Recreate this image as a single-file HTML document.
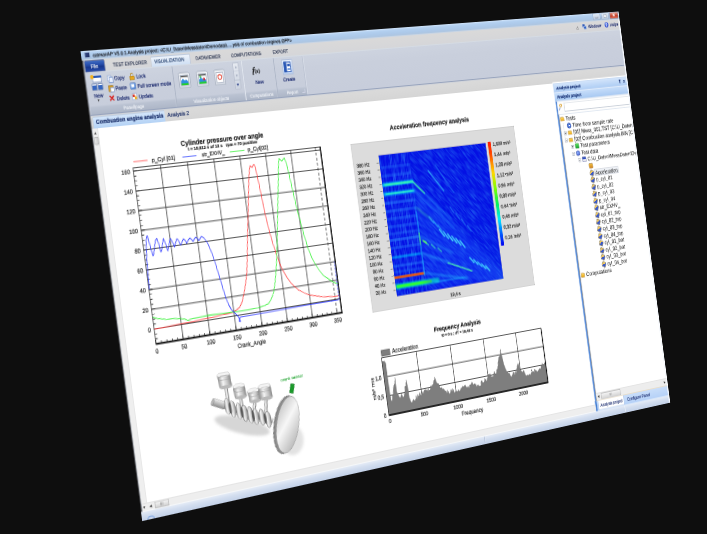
<!DOCTYPE html><html><head><meta charset="utf-8"><title>catmanAP</title>
<style>
html,body{margin:0;padding:0;background:#0e0e0e;}
body{width:707px;height:534px;overflow:hidden;position:relative;font-family:"Liberation Sans", sans-serif;}
#persp{position:absolute;left:0;top:0;width:705.60px;height:441.00px;transform-origin:0 0;transform:matrix3d(0.9380493,-0.052990099,0,0.00028470207,0.13960024,1.0644003,0,-2.1734136e-06,0,0,1,0,80.5,51.2,0,1) translate(-3px,-3px);border:3px solid transparent;background:#fff;background-clip:padding-box;box-sizing:content-box}
#win{position:absolute;left:0;top:0;width:1680px;height:1050px;transform-origin:0 0;transform:scale(0.42);background:#fff;overflow:hidden;font-size:12px;color:#1a2a50;-webkit-text-stroke:0.35px;}
#win div,#win span,#win svg{position:absolute;box-sizing:border-box;white-space:nowrap;}
.t{line-height:14px;height:14px;}
.tab{top:29px;font-size:11px;color:#2b3550;letter-spacing:0px}
.sb{font-size:12px;color:#16256b;}
.gl{top:126px;height:17px;line-height:17px;font-size:11px;color:#f4f6fa;text-align:center;}
.sep{top:50px;width:2px;height:93px;background:linear-gradient(90deg,#aab3c4 0 1px,#e4e9f1 1px 2px);}
.tr{font-size:15px;color:#111;height:18px;line-height:18px;-webkit-text-stroke:0.05px;}
.ic{width:14px;height:14px;border-radius:3px;}
#win svg text{stroke:#222;stroke-width:0.35px;}
</style></head><body>
<div id="persp"><div id="win">
<div style="left:0;top:0;width:1680px;height:21px;background:linear-gradient(180deg,#d2e5fa 0%,#b3d0f0 22%,#acc8e8 65%,#b0c5dd 100%);"></div>
<div style="left:9px;top:3px;width:14px;height:13px;background:linear-gradient(135deg,#3a4f8a,#1b2a5c);border-radius:2px;border:1px solid #8fa3c8"></div>
<div class="t" style="left:30px;top:4px;font-size:11.6px;color:#15171c;">catmanAP V5.0.1 Analysis project: &lt;C:\U_Daten\Messdaten\Demodata\.....ysis of combustion engines.OFP&gt;</div>
<div style="left:1584px;top:1px;width:27px;height:17px;border:1px solid #7f93b3;border-radius:0 0 0 4px;background:linear-gradient(180deg,#e3ecf7,#b9c9df);"></div>
<div style="left:1592px;top:10px;width:11px;height:3px;background:#fff;border:1px solid #55607a"></div>
<div style="left:1615px;top:1px;width:28px;height:17px;border:1px solid #7f93b3;background:linear-gradient(180deg,#e3ecf7,#b9c9df);"></div>
<div style="left:1624px;top:5px;width:10px;height:9px;border:1.5px solid #7d879c;background:#f4f6fa"></div>
<div style="left:1647px;top:1px;width:30px;height:17px;border:1px solid #7a2a22;border-radius:0 0 4px 0;background:linear-gradient(180deg,#e8a090 0%,#d2553f 45%,#c03a25 55%,#d9705a 100%);"></div>
<div class="t" style="left:1656px;top:2px;font-size:13px;font-weight:bold;color:#fff;">&#10005;</div>
<div style="left:0;top:21px;width:1680px;height:27px;background:linear-gradient(180deg,#dad9d9,#d5d6d9);"></div>
<div style="left:0;top:21px;width:5px;height:1029px;background:linear-gradient(90deg,#2a2a2c 0,#6a6c72 3px,#cfdcee 5px);"></div>
<div style="left:6px;top:22px;width:52px;height:26px;border-radius:3px 3px 0 0;background:linear-gradient(180deg,#3f6cc4 0%,#2248a6 45%,#17368c 55%,#2349aa 100%);border:1px solid #132a70;"></div>
<div class="t" style="left:21px;top:29px;font-size:12px;color:#fff;">File</div>
<div class="t tab" style="left:80px;">TEST EXPLORER</div>
<div style="left:182px;top:24px;width:108px;height:24px;border:1px solid #9db4d6;border-bottom:none;border-radius:3px 3px 0 0;background:linear-gradient(180deg,#eef4fc,#cfdff3);"></div>
<div class="t tab" style="left:191px;color:#24406e">VISUALIZATION</div>
<div class="t tab" style="left:305px;">DATAVIEWER</div>
<div class="t tab" style="left:405px;">COMPUTATIONS</div>
<div class="t tab" style="left:526px;">EXPORT</div>
<div class="t" style="left:1519px;top:27px;font-size:11px;color:#666;">&#9651;</div>
<div style="left:1541px;top:26px;width:10px;height:9px;background:#2a54b0;border:1px solid #fff"></div>
<div style="left:1546px;top:31px;width:10px;height:9px;background:#3565c4;border:1px solid #fff"></div>
<div class="t" style="left:1562px;top:27px;color:#1d2c6e;">Window&#x25BE;</div>
<div style="left:1623px;top:26px;width:14px;height:14px;border-radius:7px;background:radial-gradient(circle at 40% 35%,#6a8cf0,#1028b8);"></div>
<div class="t" style="left:1627px;top:26px;color:#fff;font-weight:bold;font-size:11px">?</div>
<div class="t" style="left:1643px;top:27px;color:#1d2c6e;">Help&#x25BE;</div>
<div style="left:4px;top:48px;width:1676px;height:96px;background:linear-gradient(180deg,#cdd3df 0%,#c9cfdc 30%,#c7cddb 100%);border-top:1px solid #b5bfd0;"></div>
<div style="left:6px;top:125px;width:229px;height:18px;background:linear-gradient(180deg,#bcc4d3,#adb6c7);"></div>
<div class="gl" style="left:6px;width:229px;">Panel/page</div>
<div style="left:238px;top:125px;width:192px;height:18px;background:linear-gradient(180deg,#bcc4d3,#adb6c7);"></div>
<div class="gl" style="left:238px;width:192px;">Visualization objects</div>
<div style="left:433px;top:125px;width:90px;height:18px;background:linear-gradient(180deg,#bcc4d3,#adb6c7);"></div>
<div class="gl" style="left:433px;width:90px;">Computations</div>
<div style="left:526px;top:125px;width:85px;height:18px;background:linear-gradient(180deg,#bcc4d3,#adb6c7);"></div>
<div class="gl" style="left:526px;width:85px;">Report</div>
<div class="sep" style="left:236px;"></div>
<div class="sep" style="left:431px;"></div>
<div class="sep" style="left:524px;"></div>
<div class="sep" style="left:611px;"></div>
<div style="left:16px;top:55px;width:32px;height:36px;"><div style="left:5px;top:2px;width:24px;height:15px;background:#fff;border:1px solid #3a5a9c;"></div><div style="left:5px;top:2px;width:24px;height:5px;background:#2a57b5;"></div><div style="left:0px;top:0px;width:9px;height:9px;border-radius:5px;background:#f4b21c;"></div><div style="left:2px;top:20px;width:13px;height:14px;background:linear-gradient(180deg,#fff 30%,#3565c0 30%);border:1px solid #3a5a9c;"></div><div style="left:17px;top:20px;width:13px;height:14px;background:linear-gradient(180deg,#fff 30%,#3565c0 30%);border:1px solid #3a5a9c;"></div></div>
<div class="t sb" style="left:20px;top:95px;">New</div>
<div class="t" style="left:28px;top:106px;font-size:8px;color:#333">&#x25BE;</div>
<div style="left:60px;top:59px;width:11px;height:13px;background:#fff;border:1px solid #5b7fc0;"></div><div style="left:64px;top:63px;width:11px;height:13px;background:#e8f0ff;border:1px solid #3a62b0;"></div>
<div class="t sb" style="left:78px;top:59px;">Copy</div>
<div style="left:60px;top:81px;width:13px;height:15px;background:#d9a028;border:1px solid #8a6412;border-radius:2px"></div><div style="left:65px;top:86px;width:10px;height:11px;background:#fff;border:1px solid #4a6cb0;"></div>
<div class="t sb" style="left:78px;top:82px;">Paste</div>
<div class="t" style="left:58px;top:103px;font-size:19px;line-height:16px;font-weight:bold;color:#d8201c;">&#10005;</div>
<div class="t sb" style="left:78px;top:105px;">Delete</div>
<div style="left:119px;top:64px;width:13px;height:10px;background:#e6a81e;border:1px solid #8f6510;border-radius:2px"></div><div style="left:121px;top:57px;width:9px;height:10px;border:2px solid #b98a20;border-bottom:none;border-radius:5px 5px 0 0"></div>
<div class="t sb" style="left:137px;top:59px;">Lock</div>
<div style="left:118px;top:80px;width:15px;height:14px;background:linear-gradient(135deg,#9cc3f5,#2f6fd0);border:1px solid #2a5cb0;border-radius:2px"></div><div style="left:121px;top:83px;width:8px;height:7px;background:#fff;"></div>
<div class="t sb" style="left:137px;top:81px;">Full screen mode</div>
<div style="left:119px;top:104px;width:14px;height:14px;background:#fff;border:1px solid #4a6cb0;"></div><div style="left:121px;top:106px;width:6px;height:6px;background:#d83a2a;"></div><div style="left:126px;top:111px;width:6px;height:6px;background:#f0b020;"></div>
<div class="t sb" style="left:137px;top:105px;">Update</div>
<div style="left:251px;top:66px;width:31px;height:36px;border:1px solid #8d97a8;border-radius:4px;background:linear-gradient(180deg,#f3f5f8,#d5dae3);"><div style="left:3px;top:5px;width:23px;height:24px;background:#fff;border:1px solid #6a7a94;"></div><svg style="left:4px;top:6px" width="21" height="22" viewBox="0 0 21 22"><rect width="21" height="4" fill="#5a5a5a"/><path d="M0 22 L0 14 L6 7 L11 12 L15 9 L21 15 L21 22Z" fill="#2f8fe0"/><path d="M0 22 L0 18 L21 18 L21 22Z" fill="#26d026"/></svg></div>
<div style="left:301px;top:66px;width:31px;height:36px;border:1px solid #8d97a8;border-radius:4px;background:linear-gradient(180deg,#f3f5f8,#d5dae3);"><div style="left:3px;top:5px;width:23px;height:24px;background:#fff;border:1px solid #6a7a94;"></div><svg style="left:4px;top:6px" width="21" height="22" viewBox="0 0 21 22"><rect width="21" height="4" fill="#5a5a5a"/><path d="M0 22 L0 14 L6 7 L11 12 L15 9 L21 15 L21 22Z" fill="#2f8fe0"/><path d="M0 22 L0 18 L21 18 L21 22Z" fill="#26d026"/><circle cx="15" cy="12" r="3" fill="#e02020"/><circle cx="5" cy="6" r="2.5" fill="#20c020"/></svg></div>
<div style="left:350px;top:66px;width:31px;height:36px;border:1px solid #8d97a8;border-radius:4px;background:linear-gradient(180deg,#f3f5f8,#d5dae3);"><div style="left:4px;top:5px;width:21px;height:24px;background:#fff;border:1px solid #6a7a94;border-radius:2px"></div><div style="left:8px;top:10px;width:13px;height:13px;border:2.5px solid #e03a2a;border-radius:7px;"></div></div>
<div style="left:406px;top:53px;width:16px;height:62px;border:1px solid #aab3c4;background:linear-gradient(180deg,#e6eaf1,#cdd4e0);"></div>
<div style="left:406px;top:73px;width:16px;height:1px;background:#aab3c4;"></div><div style="left:406px;top:94px;width:16px;height:1px;background:#aab3c4;"></div>
<div class="t" style="left:410px;top:57px;font-size:8px;color:#9aa4b8">&#x25B2;</div><div class="t" style="left:410px;top:77px;font-size:8px;color:#9aa4b8">&#x25BC;</div><div class="t" style="left:409px;top:98px;font-size:10px;color:#2a3f88">&#x25BC;</div>
<div class="t" style="left:460px;top:63px;font-family:'Liberation Serif',serif;font-size:20px;line-height:22px;height:22px;font-style:italic;font-weight:bold;color:#111;">f<span style="position:static;font-size:13px;font-style:normal">(x)</span></div>
<div class="t sb" style="left:465px;top:96px;">New</div>
<div style="left:548px;top:56px;width:31px;height:35px;background:linear-gradient(180deg,#e9f1fc,#b9cff0);border:1px solid #9ab0d8"></div>
<div style="left:553px;top:61px;width:21px;height:25px;background:#fff;border:2px solid #2a58b5;"></div><div style="left:553px;top:61px;width:8px;height:25px;background:#2a58b5;"></div><div style="left:563px;top:66px;width:8px;height:6px;background:#2a58b5;"></div><div style="left:563px;top:76px;width:8px;height:5px;background:#7fa3e0;"></div>
<div class="t sb" style="left:546px;top:96px;">Create</div>
<div style="left:598px;top:129px;width:8px;height:8px;border:1px solid #eef;border-top:none;border-left:none"></div>
<div style="left:4px;top:143px;width:1676px;height:31px;background:linear-gradient(180deg,#dadada,#d5d5d5);border-top:3px solid #98a4bd"></div>
<div style="left:8px;top:148px;width:193px;height:26px;background:linear-gradient(180deg,#d4e6fb,#b4d2f5);border:1px solid #8fb2e0;border-bottom:none;border-radius:2px 2px 0 0"></div>
<div class="t" style="left:16px;top:153px;font-size:13.3px;font-weight:bold;color:#152a66;">Combustion engine analysis</div>
<div class="t" style="left:207px;top:153px;font-size:13.2px;color:#1c2e66;">Analysis 2</div>
<div style="left:4px;top:174px;width:1404px;height:838px;background:#fff;"></div>
<div style="left:4px;top:174px;width:15px;height:838px;background:#efefef;border-right:1px solid #dcdcdc"></div>
<div class="t" style="left:6px;top:177px;font-size:9px;color:#444">&#x25B2;</div>
<div style="left:6px;top:193px;width:11px;height:17px;background:linear-gradient(90deg,#e8e8e8,#c9c9c9);border:1px solid #999;border-radius:2px"></div>
<svg style="left:0;top:0" width="1680" height="1050" viewBox="0 0 1680 1050" font-family='"Liberation Sans", sans-serif'><defs><linearGradient id="cbar" x1="0" y1="0" x2="0" y2="1"><stop offset="0" stop-color="#ff1a00"/><stop offset="0.12" stop-color="#ff4a00"/><stop offset="0.3" stop-color="#ffd800"/><stop offset="0.45" stop-color="#7dff00"/><stop offset="0.6" stop-color="#00f060"/><stop offset="0.75" stop-color="#00e8ff"/><stop offset="0.88" stop-color="#0060ff"/><stop offset="1" stop-color="#0000f0"/></linearGradient><filter id="noise" x="0" y="0" width="100%" height="100%"><feTurbulence type="fractalNoise" baseFrequency="0.3 0.035" numOctaves="2" seed="3"/><feColorMatrix type="matrix" values="0 0 0 0 0.05  0 0 0 0 0.45  0 0 0 0 1  1.6 0 0 0 -0.62"/></filter><filter id="noise2" x="0" y="0" width="100%" height="100%"><feTurbulence type="fractalNoise" baseFrequency="0.5 0.03" numOctaves="2" seed="8"/><feColorMatrix type="matrix" values="0 0 0 0 0.05  0 0 0 0 0.35  0 0 0 0 1  1.5 0 0 0 -0.6"/></filter><filter id="b1"><feGaussianBlur stdDeviation="1.2"/></filter><filter id="b2"><feGaussianBlur stdDeviation="2.5"/></filter><filter id="b6"><feGaussianBlur stdDeviation="7"/></filter><clipPath id="spclip"><rect x="0" y="0" width="350" height="346"/></clipPath><clipPath id="spclipR"><rect x="97" y="0" width="253" height="346"/></clipPath><linearGradient id="metal" x1="0" y1="0" x2="1" y2="0"><stop offset="0" stop-color="#9a9a9a"/><stop offset="0.35" stop-color="#f4f4f4"/><stop offset="0.7" stop-color="#c4c4c4"/><stop offset="1" stop-color="#8c8c8c"/></linearGradient><linearGradient id="metalv" x1="0" y1="0" x2="0" y2="1"><stop offset="0" stop-color="#f2f2f2"/><stop offset="0.5" stop-color="#bdbdbd"/><stop offset="1" stop-color="#8a8a8a"/></linearGradient><linearGradient id="disc" x1="0" y1="0" x2="1" y2="1"><stop offset="0" stop-color="#b8b8b8"/><stop offset="0.45" stop-color="#f7f7f7"/><stop offset="1" stop-color="#a9a9a9"/></linearGradient></defs><text x="350" y="233" font-size="16.5" font-weight="bold" text-anchor="middle" fill="#111" textLength="234" lengthAdjust="spacingAndGlyphs">Cylinder pressure over angle</text><text x="349" y="245" font-size="10" font-weight="bold" text-anchor="middle" fill="#222" textLength="196" lengthAdjust="spacingAndGlyphs">t = 10,812 s of 13 s &#160; rpm = 70 positive</text><line x1="100" y1="257" x2="138" y2="257" stroke="#ff5050" stroke-width="2"/><text x="149" y="262" font-size="12" fill="#222" textLength="64" lengthAdjust="spacingAndGlyphs" style="font-size:13.5px">p_Cyl [01]</text><line x1="233" y1="258" x2="272" y2="258" stroke="#3a4cff" stroke-width="2"/><text x="287" y="262" font-size="12" fill="#222" textLength="64" lengthAdjust="spacingAndGlyphs" style="font-size:13.5px">str_EXHV_</text><line x1="366" y1="258" x2="408" y2="258" stroke="#40f040" stroke-width="2"/><text x="417" y="262" font-size="12" fill="#222" textLength="59" lengthAdjust="spacingAndGlyphs" style="font-size:13.5px">p_Cyl[02]</text><line x1="170.9" y1="270.5" x2="170.9" y2="668.0" stroke="#222" stroke-width="1.7"/><line x1="244.8" y1="270.5" x2="244.8" y2="668.0" stroke="#222" stroke-width="1.7"/><line x1="318.7" y1="270.5" x2="318.7" y2="668.0" stroke="#222" stroke-width="1.7"/><line x1="392.6" y1="270.5" x2="392.6" y2="668.0" stroke="#222" stroke-width="1.7"/><line x1="466.4" y1="270.5" x2="466.4" y2="668.0" stroke="#222" stroke-width="1.7"/><line x1="540.3" y1="270.5" x2="540.3" y2="668.0" stroke="#222" stroke-width="1.7"/><line x1="614.2" y1="270.5" x2="614.2" y2="668.0" stroke="#222" stroke-width="1.7" stroke-dasharray="7 5"/><line x1="97.0" y1="634.6" x2="629.0" y2="634.6" stroke="#222" stroke-width="1.7"/><line x1="97.0" y1="590.0" x2="629.0" y2="590.0" stroke="#222" stroke-width="1.7"/><line x1="97.0" y1="545.4" x2="629.0" y2="545.4" stroke="#222" stroke-width="1.7"/><line x1="97.0" y1="500.8" x2="629.0" y2="500.8" stroke="#222" stroke-width="1.7"/><line x1="97.0" y1="456.2" x2="629.0" y2="456.2" stroke="#222" stroke-width="1.7"/><line x1="97.0" y1="411.6" x2="629.0" y2="411.6" stroke="#222" stroke-width="1.7"/><line x1="97.0" y1="367.0" x2="629.0" y2="367.0" stroke="#222" stroke-width="1.7"/><line x1="97.0" y1="322.4" x2="629.0" y2="322.4" stroke="#222" stroke-width="1.7"/><line x1="97.0" y1="277.8" x2="629.0" y2="277.8" stroke="#222" stroke-width="1.7"/><rect x="97.0" y="270.5" width="532.0" height="397.5" fill="none" stroke="#222" stroke-width="1.7"/><line x1="96.0" y1="668.0" x2="631.0" y2="668.0" stroke="#111" stroke-width="4"/><line x1="629.0" y1="269.5" x2="629.0" y2="668.0" stroke="#111" stroke-width="3.4"/><path d="M97.0 668.0v-9M111.8 668.0v-6M126.6 668.0v-6M141.3 668.0v-6M156.1 668.0v-6M170.9 668.0v-9M185.7 668.0v-6M200.4 668.0v-6M215.2 668.0v-6M230.0 668.0v-6M244.8 668.0v-9M259.6 668.0v-6M274.3 668.0v-6M289.1 668.0v-6M303.9 668.0v-6M318.7 668.0v-9M333.4 668.0v-6M348.2 668.0v-6M363.0 668.0v-6M377.8 668.0v-6M392.6 668.0v-9M407.3 668.0v-6M422.1 668.0v-6M436.9 668.0v-6M451.7 668.0v-6M466.4 668.0v-9M481.2 668.0v-6M496.0 668.0v-6M510.8 668.0v-6M525.6 668.0v-6M540.3 668.0v-9M555.1 668.0v-6M569.9 668.0v-6M584.7 668.0v-6M599.4 668.0v-6M614.2 668.0v-9M97.0 656.9h6M97.0 645.8h6M97.0 634.6h9M97.0 623.5h6M97.0 612.3h6M97.0 601.2h6M97.0 590.0h9M97.0 578.9h6M97.0 567.7h6M97.0 556.5h6M97.0 545.4h9M97.0 534.2h6M97.0 523.1h6M97.0 512.0h6M97.0 500.8h9M97.0 489.6h6M97.0 478.5h6M97.0 467.4h6M97.0 456.2h9M97.0 445.1h6M97.0 433.9h6M97.0 422.8h6M97.0 411.6h9M97.0 400.5h6M97.0 389.3h6M97.0 378.1h6M97.0 367.0h9M97.0 355.9h6M97.0 344.7h6M97.0 333.6h6M97.0 322.4h9M97.0 311.2h6M97.0 300.1h6M97.0 288.9h6M97.0 277.8h9" stroke="#111" stroke-width="1.5" fill="none"/><text x="97.0" y="689.0" font-size="14" text-anchor="middle" fill="#222">0</text><text x="170.9" y="689.0" font-size="14" text-anchor="middle" fill="#222">50</text><text x="244.8" y="689.0" font-size="14" text-anchor="middle" fill="#222">100</text><text x="318.7" y="689.0" font-size="14" text-anchor="middle" fill="#222">150</text><text x="392.6" y="689.0" font-size="14" text-anchor="middle" fill="#222">200</text><text x="466.4" y="689.0" font-size="14" text-anchor="middle" fill="#222">250</text><text x="540.3" y="689.0" font-size="14" text-anchor="middle" fill="#222">300</text><text x="614.2" y="689.0" font-size="14" text-anchor="middle" fill="#222">350</text><text x="88.0" y="639.6" font-size="14" text-anchor="end" fill="#222">0</text><text x="88.0" y="595.0" font-size="14" text-anchor="end" fill="#222">20</text><text x="88.0" y="550.4" font-size="14" text-anchor="end" fill="#222">40</text><text x="88.0" y="505.8" font-size="14" text-anchor="end" fill="#222">60</text><text x="88.0" y="461.2" font-size="14" text-anchor="end" fill="#222">80</text><text x="88.0" y="416.6" font-size="14" text-anchor="end" fill="#222">100</text><text x="88.0" y="372.0" font-size="14" text-anchor="end" fill="#222">120</text><text x="88.0" y="327.4" font-size="14" text-anchor="end" fill="#222">140</text><text x="88.0" y="282.8" font-size="14" text-anchor="end" fill="#222">160</text><text x="357" y="709" font-size="14" text-anchor="middle" fill="#222">Crank_Angle</text><path d="M97.0 634.6 L185.7 632.4 L244.8 630.1 L289.1 627.9 L315.7 625.7 L327.5 621.2 L336.4 616.8 L345.3 605.6 L354.1 585.5 L363.0 561.0 L368.9 540.9 L374.8 512.0 L380.7 478.5 L388.1 438.4 L395.5 400.5 L402.9 360.3 L410.3 322.4 L414.7 304.6 L417.7 295.6 L420.6 297.9 L423.6 300.1 L426.5 295.6 L429.5 293.4 L432.5 302.3 L433.9 315.7 L436.9 344.7 L439.8 378.1 L442.8 411.6 L447.2 445.1 L453.1 478.5 L459.1 505.3 L465.0 527.6 L472.4 547.6 L481.2 565.5 L490.1 578.9 L500.4 590.0 L510.8 598.9 L525.6 607.8 L540.3 614.5 L558.1 619.0 L577.3 623.5 L599.4 625.7 L617.2 627.9 L627.5 627.9" fill="none" stroke="#ff3838" stroke-width="1.8" stroke-linejoin="round" /><path d="M97.0 607.8 L108.8 612.3 L131.0 616.8 L156.1 619.0 L170.9 621.2 L182.7 623.5 L190.1 627.9 L197.5 625.7 L210.8 624.6 L250.7 623.5 L299.5 624.6 L326.1 625.7 L361.5 625.7 L388.1 624.6 L407.3 622.3 L419.2 619.0 L428.0 610.1 L436.9 596.7 L444.3 576.6 L451.7 549.9 L459.1 518.6 L465.0 487.4 L472.4 449.5 L479.7 409.4 L487.1 369.2 L494.5 331.3 L499.0 304.6 L503.4 286.7 L506.3 288.9 L510.8 293.4 L515.2 288.9 L519.6 286.7 L522.6 297.9 L525.6 315.7 L528.5 342.5 L531.5 367.0 L534.4 391.5 L537.4 416.1 L541.8 440.6 L546.2 467.4 L550.7 489.6 L555.1 509.7 L561.0 527.6 L569.9 545.4 L578.8 561.0 L589.1 574.4 L603.9 585.5 L617.2 594.5 L627.5 598.9" fill="none" stroke="#2af02a" stroke-width="1.8" stroke-linejoin="round" /><path d="M97.7 545.4 L98.5 527.6 L101.4 478.5 L105.9 438.4 L108.8 427.2 L111.0 425.0 L113.3 438.4 L116.2 456.2 L119.2 471.8 L122.1 467.4 L126.6 451.7 L131.0 438.4 L135.4 433.9 L138.4 445.1 L141.3 465.1 L144.3 462.9 L148.7 447.3 L153.2 436.1 L157.6 451.7 L160.5 465.1 L165.0 454.0 L169.4 440.6 L172.4 438.4 L176.8 449.5 L179.8 458.4 L184.2 449.5 L188.6 440.6 L191.6 442.8 L194.5 451.7 L197.5 456.2 L201.9 449.5 L206.4 442.8 L210.8 447.3 L213.7 454.0 L219.7 447.3 L224.1 442.8 L228.5 447.3 L231.5 451.7 L235.9 447.3 L240.3 442.8 L244.8 447.3 L247.7 451.7 L252.2 447.3 L256.6 442.8 L262.5 447.3 L268.4 456.2 L272.9 465.1 L277.3 478.5 L281.7 494.1 L286.2 514.2 L290.6 536.5 L295.0 558.8 L300.9 587.8 L306.8 607.8 L312.8 619.0 L318.7 625.7 L324.6 632.4 L330.5 639.1 L332.0 648.0 L333.4 640.2 L340.8 639.1 L466.4 637.9 L611.3 636.8 L623.1 636.8" fill="none" stroke="#2a36ff" stroke-width="1.8" stroke-linejoin="round" /><path d="M626.0 636.8 L626.0 545.4" fill="none" stroke="#2a36ff" stroke-width="1.8" stroke-linejoin="round" stroke-dasharray="5 3"/><circle cx="332.0" cy="648.0" r="2.5" fill="#2a36ff"/><text x="978" y="248" font-size="16" font-weight="bold" text-anchor="middle" fill="#111" textLength="258" lengthAdjust="spacingAndGlyphs">Acceleration frequency analysis</text><rect x="722" y="272" width="532" height="408" fill="#dcdcdc" stroke="#a8a8a8" stroke-width="1.5"/><rect x="723" y="273" width="530" height="406" fill="none" stroke="#f0f0f0" stroke-width="1"/><text x="771" y="329.5" font-size="12.5" text-anchor="end" fill="#222">380 Hz</text><line x1="794" y1="325.0" x2="801" y2="325.0" stroke="#444" stroke-width="1.2"/><text x="771" y="346.8" font-size="12.5" text-anchor="end" fill="#222">360 Hz</text><line x1="794" y1="342.3" x2="801" y2="342.3" stroke="#444" stroke-width="1.2"/><text x="771" y="364.1" font-size="12.5" text-anchor="end" fill="#222">340 Hz</text><line x1="794" y1="359.6" x2="801" y2="359.6" stroke="#444" stroke-width="1.2"/><text x="771" y="381.3" font-size="12.5" text-anchor="end" fill="#222">320 Hz</text><line x1="794" y1="376.8" x2="801" y2="376.8" stroke="#444" stroke-width="1.2"/><text x="771" y="398.6" font-size="12.5" text-anchor="end" fill="#222">300 Hz</text><line x1="794" y1="394.1" x2="801" y2="394.1" stroke="#444" stroke-width="1.2"/><text x="771" y="415.9" font-size="12.5" text-anchor="end" fill="#222">280 Hz</text><line x1="794" y1="411.4" x2="801" y2="411.4" stroke="#444" stroke-width="1.2"/><text x="771" y="433.2" font-size="12.5" text-anchor="end" fill="#222">260 Hz</text><line x1="794" y1="428.7" x2="801" y2="428.7" stroke="#444" stroke-width="1.2"/><text x="771" y="450.5" font-size="12.5" text-anchor="end" fill="#222">240 Hz</text><line x1="794" y1="446.0" x2="801" y2="446.0" stroke="#444" stroke-width="1.2"/><text x="771" y="467.7" font-size="12.5" text-anchor="end" fill="#222">220 Hz</text><line x1="794" y1="463.2" x2="801" y2="463.2" stroke="#444" stroke-width="1.2"/><text x="771" y="485.0" font-size="12.5" text-anchor="end" fill="#222">200 Hz</text><line x1="794" y1="480.5" x2="801" y2="480.5" stroke="#444" stroke-width="1.2"/><text x="771" y="502.3" font-size="12.5" text-anchor="end" fill="#222">180 Hz</text><line x1="794" y1="497.8" x2="801" y2="497.8" stroke="#444" stroke-width="1.2"/><text x="771" y="519.6" font-size="12.5" text-anchor="end" fill="#222">160 Hz</text><line x1="794" y1="515.1" x2="801" y2="515.1" stroke="#444" stroke-width="1.2"/><text x="771" y="536.9" font-size="12.5" text-anchor="end" fill="#222">140 Hz</text><line x1="794" y1="532.4" x2="801" y2="532.4" stroke="#444" stroke-width="1.2"/><text x="771" y="554.1" font-size="12.5" text-anchor="end" fill="#222">120 Hz</text><line x1="794" y1="549.6" x2="801" y2="549.6" stroke="#444" stroke-width="1.2"/><text x="771" y="571.4" font-size="12.5" text-anchor="end" fill="#222">100 Hz</text><line x1="794" y1="566.9" x2="801" y2="566.9" stroke="#444" stroke-width="1.2"/><text x="771" y="588.7" font-size="12.5" text-anchor="end" fill="#222">80 Hz</text><line x1="794" y1="584.2" x2="801" y2="584.2" stroke="#444" stroke-width="1.2"/><text x="771" y="606.0" font-size="12.5" text-anchor="end" fill="#222">60 Hz</text><line x1="794" y1="601.5" x2="801" y2="601.5" stroke="#444" stroke-width="1.2"/><text x="771" y="623.3" font-size="12.5" text-anchor="end" fill="#222">40 Hz</text><line x1="794" y1="618.8" x2="801" y2="618.8" stroke="#444" stroke-width="1.2"/><text x="771" y="640.5" font-size="12.5" text-anchor="end" fill="#222">20 Hz</text><line x1="794" y1="636.0" x2="801" y2="636.0" stroke="#444" stroke-width="1.2"/><text x="988" y="674" font-size="12.3" text-anchor="middle" fill="#222">19,4 s</text><rect x="801" y="305" width="352" height="348" fill="#f3e6c4"/><g transform="translate(802,306)" clip-path="url(#spclip)"><rect width="350" height="346" fill="#0410e4"/><rect width="98" height="346" filter="url(#noise2)" opacity="0.9"/><g clip-path="url(#spclipR)"><rect x="-300" y="-300" width="900" height="900" filter="url(#noise)" opacity="0.55" transform="rotate(-42 175 173)"/></g><rect x="0.0" y="28.6" width="96.3" height="5.0" fill="#2f8cff" opacity="0.45" filter="url(#b2)"/><rect x="0.0" y="49.4" width="96.3" height="5.0" fill="#2f8cff" opacity="0.55" filter="url(#b2)"/><rect x="0.0" y="116.2" width="96.3" height="5.0" fill="#2f8cff" opacity="0.80" filter="url(#b2)"/><rect x="0.0" y="135.9" width="96.3" height="5.0" fill="#2f8cff" opacity="0.70" filter="url(#b2)"/><rect x="0.0" y="154.9" width="96.3" height="5.0" fill="#2f8cff" opacity="0.60" filter="url(#b2)"/><rect x="0.0" y="174.0" width="96.3" height="5.0" fill="#2f8cff" opacity="0.60" filter="url(#b2)"/><rect x="0.0" y="191.3" width="96.3" height="5.0" fill="#2f8cff" opacity="0.55" filter="url(#b2)"/><rect x="0.0" y="206.5" width="96.3" height="5.0" fill="#2f8cff" opacity="0.90" filter="url(#b2)"/><rect x="0.0" y="225.9" width="96.3" height="5.0" fill="#2f8cff" opacity="0.60" filter="url(#b2)"/><rect x="0.0" y="270.5" width="96.3" height="5.0" fill="#2f8cff" opacity="0.75" filter="url(#b2)"/><rect x="0.0" y="284.7" width="96.3" height="5.0" fill="#2f8cff" opacity="0.50" filter="url(#b2)"/><rect x="0.0" y="69.7" width="98.0" height="8.0" fill="#00e8ff" opacity="1.00" filter="url(#b2)"/><rect x="7.0" y="71.9" width="91.0" height="3.5" fill="#48ffa0" opacity="1.00" filter="url(#b1)"/><rect x="0.0" y="92.7" width="99.7" height="7.0" fill="#00d8ff" opacity="1.00" filter="url(#b2)"/><rect x="7.0" y="94.7" width="91.0" height="3.0" fill="#40ffb8" opacity="0.90" filter="url(#b1)"/><rect x="0.0" y="249.0" width="93.8" height="5.0" fill="#00d0ff" opacity="0.90" filter="url(#b2)"/><rect x="0.0" y="316.0" width="140.0" height="13.0" fill="#00e8c0" opacity="0.90" filter="url(#b2)"/><rect x="3.5" y="319.2" width="112.0" height="6.5" fill="#30ff30" opacity="1.00" filter="url(#b1)"/><rect x="0.0" y="297.6" width="96.3" height="5.5" fill="#ffb000" opacity="0.85" filter="url(#b1)"/><rect x="0.0" y="298.9" width="94.5" height="2.8" fill="#ff2000" opacity="1.00" filter="url(#b1)"/><rect x="94" y="72" width="3" height="75" fill="#20a8ff" opacity="0.3" filter="url(#b1)"/><rect x="94" y="147" width="3" height="160" fill="#20d0ff" opacity="0.75" filter="url(#b1)"/><rect x="94" y="200" width="3" height="30" fill="#60ff60" opacity="0.9" filter="url(#b1)"/><path d="M97 75 L350 330 L350 346 L97 346Z" fill="#1a50ff" opacity="0.28" filter="url(#b6)"/><line x1="97.3" y1="-294.1" x2="350.0" y2="272.6" stroke="#2f78ff" stroke-width="2.0" opacity="0.30" stroke-linecap="round" filter="url(#b2)"/><line x1="97.3" y1="-242.2" x2="350.0" y2="280.0" stroke="#2f78ff" stroke-width="2.0" opacity="0.30" stroke-linecap="round" filter="url(#b2)"/><line x1="97.3" y1="-193.8" x2="350.0" y2="286.9" stroke="#2f78ff" stroke-width="2.0" opacity="0.30" stroke-linecap="round" filter="url(#b2)"/><line x1="97.3" y1="-148.8" x2="350.0" y2="293.3" stroke="#2f78ff" stroke-width="2.0" opacity="0.30" stroke-linecap="round" filter="url(#b2)"/><line x1="97.3" y1="-110.7" x2="350.0" y2="298.7" stroke="#2f78ff" stroke-width="2.0" opacity="0.30" stroke-linecap="round" filter="url(#b2)"/><line x1="97.3" y1="-76.1" x2="350.0" y2="303.6" stroke="#2f78ff" stroke-width="2.0" opacity="0.30" stroke-linecap="round" filter="url(#b2)"/><line x1="97.3" y1="-45.0" x2="350.0" y2="308.1" stroke="#2f78ff" stroke-width="2.0" opacity="0.30" stroke-linecap="round" filter="url(#b2)"/><line x1="97.3" y1="-17.3" x2="350.0" y2="312.0" stroke="#2f78ff" stroke-width="2.0" opacity="0.30" stroke-linecap="round" filter="url(#b2)"/><line x1="97.3" y1="10.4" x2="350.0" y2="316.0" stroke="#2f78ff" stroke-width="2.0" opacity="0.30" stroke-linecap="round" filter="url(#b2)"/><line x1="97.3" y1="41.5" x2="350.0" y2="320.4" stroke="#2f78ff" stroke-width="2.0" opacity="0.30" stroke-linecap="round" filter="url(#b2)"/><line x1="97.3" y1="74.4" x2="350.0" y2="325.1" stroke="#3a90ff" stroke-width="2.2" opacity="0.50" stroke-linecap="round" filter="url(#b2)"/><line x1="97.3" y1="96.9" x2="350.0" y2="328.3" stroke="#3a90ff" stroke-width="2.2" opacity="0.50" stroke-linecap="round" filter="url(#b2)"/><line x1="97.3" y1="118.7" x2="350.0" y2="331.4" stroke="#3a90ff" stroke-width="2.2" opacity="0.50" stroke-linecap="round" filter="url(#b2)"/><line x1="97.3" y1="138.4" x2="350.0" y2="334.2" stroke="#3a90ff" stroke-width="2.2" opacity="0.50" stroke-linecap="round" filter="url(#b2)"/><line x1="97.3" y1="157.4" x2="350.0" y2="336.9" stroke="#3a90ff" stroke-width="2.2" opacity="0.50" stroke-linecap="round" filter="url(#b2)"/><line x1="97.3" y1="176.5" x2="350.0" y2="339.6" stroke="#3a90ff" stroke-width="2.2" opacity="0.50" stroke-linecap="round" filter="url(#b2)"/><line x1="97.3" y1="193.8" x2="350.0" y2="342.1" stroke="#3a90ff" stroke-width="2.2" opacity="0.50" stroke-linecap="round" filter="url(#b2)"/><line x1="97.3" y1="209.0" x2="350.0" y2="344.3" stroke="#3a90ff" stroke-width="2.2" opacity="0.50" stroke-linecap="round" filter="url(#b2)"/><line x1="97.3" y1="228.4" x2="350.0" y2="347.0" stroke="#3a90ff" stroke-width="2.2" opacity="0.50" stroke-linecap="round" filter="url(#b2)"/><line x1="97.3" y1="251.5" x2="350.0" y2="350.3" stroke="#3a90ff" stroke-width="2.2" opacity="0.50" stroke-linecap="round" filter="url(#b2)"/><line x1="97.3" y1="273.0" x2="350.0" y2="353.4" stroke="#3a90ff" stroke-width="2.2" opacity="0.50" stroke-linecap="round" filter="url(#b2)"/><line x1="97.3" y1="287.2" x2="350.0" y2="355.4" stroke="#3a90ff" stroke-width="2.2" opacity="0.50" stroke-linecap="round" filter="url(#b2)"/><line x1="97.3" y1="74.4" x2="129.5" y2="106.3" stroke="#40ffb0" stroke-width="3.5" opacity="0.90" stroke-linecap="round" filter="url(#b1)"/><line x1="129.5" y1="106.3" x2="203.0" y2="179.3" stroke="#30b8ff" stroke-width="3.0" opacity="0.60" stroke-linecap="round" filter="url(#b2)"/><line x1="97.3" y1="96.9" x2="210.0" y2="200.1" stroke="#2fa8ff" stroke-width="3.0" opacity="0.55" stroke-linecap="round" filter="url(#b2)"/><line x1="150.5" y1="52.0" x2="192.5" y2="106.8" stroke="#38d0ff" stroke-width="3.0" opacity="0.80" stroke-linecap="round" filter="url(#b1)"/><line x1="175.0" y1="40.6" x2="224.0" y2="114.3" stroke="#30b0ff" stroke-width="2.6" opacity="0.50" stroke-linecap="round" filter="url(#b1)"/><line x1="97.3" y1="209.0" x2="196.0" y2="261.8" stroke="#30b0ff" stroke-width="3.0" opacity="0.60" stroke-linecap="round" filter="url(#b2)"/><line x1="97.3" y1="251.5" x2="182.0" y2="284.7" stroke="#30c8ff" stroke-width="3.0" opacity="0.70" stroke-linecap="round" filter="url(#b2)"/><line x1="97.3" y1="300.3" x2="231.0" y2="330.5" stroke="#30e0ff" stroke-width="3.5" opacity="0.75" stroke-linecap="round" filter="url(#b2)"/><line x1="97.3" y1="138.4" x2="143.5" y2="174.2" stroke="#40e8a0" stroke-width="3.0" opacity="0.60" stroke-linecap="round" filter="url(#b2)"/><line x1="161.0" y1="199.1" x2="175.0" y2="218.2" stroke="#50f4ff" stroke-width="3.2" opacity="0.95" stroke-linecap="round" filter="url(#b1)"/><line x1="173.4" y1="206.1" x2="187.4" y2="225.1" stroke="#50f4ff" stroke-width="3.2" opacity="0.95" stroke-linecap="round" filter="url(#b1)"/><line x1="185.8" y1="213.1" x2="199.8" y2="232.1" stroke="#50f4ff" stroke-width="3.2" opacity="0.95" stroke-linecap="round" filter="url(#b1)"/><line x1="198.2" y1="220.1" x2="212.2" y2="239.1" stroke="#50f4ff" stroke-width="3.2" opacity="0.95" stroke-linecap="round" filter="url(#b1)"/><line x1="210.6" y1="227.1" x2="224.6" y2="246.1" stroke="#50f4ff" stroke-width="3.2" opacity="0.95" stroke-linecap="round" filter="url(#b1)"/><line x1="223.0" y1="234.1" x2="237.0" y2="253.1" stroke="#50f4ff" stroke-width="3.2" opacity="0.95" stroke-linecap="round" filter="url(#b1)"/><line x1="133.9" y1="164.3" x2="146.1" y2="181.7" stroke="#38c8ff" stroke-width="2.8" opacity="0.70" stroke-linecap="round" filter="url(#b1)"/><line x1="146.1" y1="176.5" x2="158.4" y2="193.8" stroke="#38c8ff" stroke-width="2.8" opacity="0.70" stroke-linecap="round" filter="url(#b1)"/><line x1="158.4" y1="188.6" x2="170.6" y2="205.9" stroke="#38c8ff" stroke-width="2.8" opacity="0.70" stroke-linecap="round" filter="url(#b1)"/><line x1="247.3" y1="279.6" x2="259.5" y2="293.4" stroke="#48e8ff" stroke-width="3.2" opacity="0.95" stroke-linecap="round" filter="url(#b1)"/><line x1="259.4" y1="286.3" x2="271.7" y2="300.2" stroke="#48e8ff" stroke-width="3.2" opacity="0.95" stroke-linecap="round" filter="url(#b1)"/><line x1="271.6" y1="293.1" x2="283.8" y2="306.9" stroke="#48e8ff" stroke-width="3.2" opacity="0.95" stroke-linecap="round" filter="url(#b1)"/><line x1="283.8" y1="299.8" x2="296.0" y2="313.6" stroke="#48e8ff" stroke-width="3.2" opacity="0.95" stroke-linecap="round" filter="url(#b1)"/><line x1="295.9" y1="306.6" x2="308.2" y2="320.4" stroke="#48e8ff" stroke-width="3.2" opacity="0.95" stroke-linecap="round" filter="url(#b1)"/><line x1="175.0" y1="284.1" x2="189.0" y2="290.3" stroke="#50ffb0" stroke-width="3.5" opacity="0.90" stroke-linecap="round" filter="url(#b1)"/><line x1="190.2" y1="290.0" x2="204.2" y2="296.3" stroke="#50ffb0" stroke-width="3.5" opacity="0.90" stroke-linecap="round" filter="url(#b1)"/><line x1="205.4" y1="296.0" x2="219.4" y2="302.2" stroke="#50ffb0" stroke-width="3.5" opacity="0.90" stroke-linecap="round" filter="url(#b1)"/><line x1="220.7" y1="302.0" x2="234.7" y2="308.2" stroke="#50ffb0" stroke-width="3.5" opacity="0.90" stroke-linecap="round" filter="url(#b1)"/><line x1="235.9" y1="307.9" x2="249.9" y2="314.2" stroke="#50ffb0" stroke-width="3.5" opacity="0.90" stroke-linecap="round" filter="url(#b1)"/><line x1="110.2" y1="223.2" x2="120.8" y2="233.6" stroke="#40f0c0" stroke-width="3.0" opacity="0.80" stroke-linecap="round" filter="url(#b1)"/><line x1="129.5" y1="233.5" x2="140.0" y2="243.9" stroke="#40f0c0" stroke-width="3.0" opacity="0.80" stroke-linecap="round" filter="url(#b1)"/><line x1="148.8" y1="243.9" x2="159.2" y2="254.3" stroke="#40f0c0" stroke-width="3.0" opacity="0.80" stroke-linecap="round" filter="url(#b1)"/><line x1="204.8" y1="147.9" x2="215.2" y2="163.5" stroke="#3ab8ff" stroke-width="2.6" opacity="0.60" stroke-linecap="round" filter="url(#b1)"/><line x1="221.1" y1="165.2" x2="231.6" y2="180.8" stroke="#3ab8ff" stroke-width="2.6" opacity="0.60" stroke-linecap="round" filter="url(#b1)"/><line x1="237.4" y1="182.5" x2="247.9" y2="198.1" stroke="#3ab8ff" stroke-width="2.6" opacity="0.60" stroke-linecap="round" filter="url(#b1)"/><line x1="253.8" y1="199.8" x2="264.2" y2="215.4" stroke="#3ab8ff" stroke-width="2.6" opacity="0.60" stroke-linecap="round" filter="url(#b1)"/><line x1="126.0" y1="325.2" x2="224.0" y2="328.0" stroke="#20d8ff" stroke-width="4.0" opacity="0.70" stroke-linecap="round" filter="url(#b2)"/><line x1="105.0" y1="221.4" x2="115.5" y2="228.4" stroke="#60ff60" stroke-width="4.0" opacity="0.90" stroke-linecap="round" filter="url(#b1)"/></g><rect x="1159" y="305" width="10" height="264" fill="url(#cbar)"/><text x="1175" y="316.5" font-size="12.8" fill="#222" textLength="61" lengthAdjust="spacingAndGlyphs">1,600 m/s&#178;</text><text x="1175" y="342.9" font-size="12.8" fill="#222" textLength="56" lengthAdjust="spacingAndGlyphs">1,44 m/s&#178;</text><text x="1175" y="369.3" font-size="12.8" fill="#222" textLength="56" lengthAdjust="spacingAndGlyphs">1,28 m/s&#178;</text><text x="1175" y="395.7" font-size="12.8" fill="#222" textLength="56" lengthAdjust="spacingAndGlyphs">1,12 m/s&#178;</text><text x="1175" y="422.1" font-size="12.8" fill="#222" textLength="56" lengthAdjust="spacingAndGlyphs">0,96 m/s&#178;</text><text x="1175" y="448.5" font-size="12.8" fill="#222" textLength="56" lengthAdjust="spacingAndGlyphs">0,80 m/s&#178;</text><text x="1175" y="474.9" font-size="12.8" fill="#222" textLength="56" lengthAdjust="spacingAndGlyphs">0,64 m/s&#178;</text><text x="1175" y="501.3" font-size="12.8" fill="#222" textLength="56" lengthAdjust="spacingAndGlyphs">0,48 m/s&#178;</text><text x="1175" y="527.7" font-size="12.8" fill="#222" textLength="56" lengthAdjust="spacingAndGlyphs">0,32 m/s&#178;</text><text x="1175" y="554.1" font-size="12.8" fill="#222" textLength="56" lengthAdjust="spacingAndGlyphs">0,16 m/s&#178;</text><text x="981" y="753" font-size="16" font-weight="bold" text-anchor="middle" fill="#111" textLength="154" lengthAdjust="spacingAndGlyphs">Frequency Analysis</text><text x="977" y="768" font-size="9.5" font-weight="bold" text-anchor="middle" fill="#222" textLength="103" lengthAdjust="spacingAndGlyphs">t0 = 0 s ; dT = 19,42 s</text><rect x="731" y="774" width="27" height="14" fill="#7d7d7d" stroke="#444" stroke-width="1"/><text x="765" y="785" font-size="15" fill="#222">Acceleration</text><line x1="839.6" y1="792.0" x2="839.6" y2="931.0" stroke="#222" stroke-width="1.6"/><text x="839.6" y="950.0" font-size="14" text-anchor="middle" fill="#222">500</text><line x1="949.2" y1="792.0" x2="949.2" y2="931.0" stroke="#222" stroke-width="1.6"/><text x="949.2" y="950.0" font-size="14" text-anchor="middle" fill="#222">1000</text><line x1="1058.8" y1="792.0" x2="1058.8" y2="931.0" stroke="#222" stroke-width="1.6"/><text x="1058.8" y="950.0" font-size="14" text-anchor="middle" fill="#222">1500</text><line x1="1168.3" y1="792.0" x2="1168.3" y2="931.0" stroke="#222" stroke-width="1.6"/><text x="1168.3" y="950.0" font-size="14" text-anchor="middle" fill="#222">2000</text><text x="731.0" y="950.0" font-size="14" text-anchor="middle" fill="#222">0</text><line x1="730.0" y1="884.7" x2="1256.0" y2="884.7" stroke="#222" stroke-width="1.6"/><text x="722.0" y="889.7" font-size="14" text-anchor="end" fill="#222">0,5</text><line x1="730.0" y1="838.3" x2="1256.0" y2="838.3" stroke="#222" stroke-width="1.6"/><text x="722.0" y="843.3" font-size="14" text-anchor="end" fill="#222">1,0</text><text x="722.0" y="935.0" font-size="14" text-anchor="end" fill="#222">0</text><text transform="translate(698,862) rotate(-90)" font-size="14" text-anchor="middle" fill="#222">m/s&#178; rms</text><text x="993" y="969" font-size="15" text-anchor="middle" fill="#222">Frequency</text><path d="M730.0 931.0 L730.0 799.0 L733.2 802.9 L736.3 799.2 L740.5 806.0 L740.5 843.3 L741.0 880.4 L743.1 899.3 L745.8 898.2 L748.4 883.9 L751.0 884.6 L753.7 870.0 L756.0 864.3 L758.4 860.0 L760.8 857.7 L763.1 843.6 L762.6 877.6 L765.5 885.6 L768.4 891.0 L771.4 897.2 L774.4 890.0 L777.3 886.1 L779.8 894.9 L782.2 896.0 L784.7 890.3 L787.6 883.9 L790.5 869.4 L793.4 870.3 L796.3 854.8 L798.4 870.7 L799.4 898.9 L802.3 910.8 L805.2 912.2 L808.0 910.4 L810.7 904.5 L813.4 908.2 L816.2 909.3 L818.9 905.0 L821.3 897.5 L823.6 908.2 L826.0 894.7 L828.4 900.3 L830.7 900.1 L833.1 891.5 L835.6 899.7 L838.0 898.4 L840.5 895.8 L842.8 890.8 L845.2 897.7 L847.6 890.1 L849.9 887.9 L852.5 887.1 L855.0 890.6 L857.5 887.9 L860.0 894.4 L862.6 886.7 L865.3 892.7 L868.0 889.2 L870.8 881.2 L873.5 883.3 L876.2 879.4 L879.0 879.1 L881.8 871.0 L884.5 868.5 L887.3 862.2 L889.9 874.6 L892.5 878.7 L895.2 878.8 L897.8 882.9 L900.4 892.0 L903.1 889.9 L905.7 893.0 L908.3 896.4 L910.9 894.3 L913.6 900.8 L916.5 900.3 L919.4 907.7 L922.3 899.3 L925.1 905.8 L927.9 911.1 L930.6 905.4 L933.4 899.2 L936.1 906.2 L938.8 898.5 L941.5 902.8 L944.1 911.8 L946.7 905.9 L949.3 909.6 L952.1 906.4 L954.8 908.2 L957.5 903.2 L960.3 910.1 L963.0 905.3 L965.4 901.9 L967.8 901.3 L970.1 899.5 L972.5 897.2 L975.4 900.5 L978.3 896.4 L981.2 896.2 L984.1 902.2 L986.8 903.1 L989.5 899.6 L992.3 907.1 L995.0 897.4 L997.7 897.9 L1000.3 897.0 L1002.8 892.0 L1005.3 894.1 L1007.8 901.3 L1010.4 896.7 L1012.8 900.6 L1015.2 897.7 L1017.6 907.7 L1020.0 902.6 L1022.5 901.7 L1025.3 906.2 L1028.1 905.4 L1031.0 904.8 L1033.8 893.4 L1036.7 894.3 L1039.2 900.6 L1041.7 898.7 L1044.2 896.5 L1046.8 889.5 L1049.3 893.1 L1051.7 898.5 L1054.2 891.6 L1056.6 888.5 L1059.1 882.1 L1061.6 881.2 L1064.0 882.5 L1066.4 879.8 L1068.8 889.0 L1071.3 888.1 L1073.7 889.8 L1076.1 887.5 L1078.8 880.7 L1081.6 876.9 L1084.3 885.3 L1087.0 882.2 L1089.8 873.5 L1092.3 872.5 L1094.8 866.5 L1097.3 856.9 L1099.8 849.3 L1102.4 843.3 L1105.0 841.8 L1107.7 839.3 L1110.3 824.9 L1112.9 847.9 L1115.3 862.0 L1117.7 871.1 L1120.8 881.2 L1124.0 885.0 L1126.6 889.1 L1129.2 887.3 L1131.9 894.6 L1134.5 899.4 L1137.1 897.8 L1139.8 893.5 L1142.4 889.8 L1145.0 888.0 L1147.6 897.1 L1150.3 886.9 L1152.9 892.5 L1155.5 883.9 L1158.2 876.5 L1160.8 871.5 L1163.4 868.2 L1167.1 885.0 L1169.6 888.9 L1172.2 889.8 L1174.7 894.9 L1177.2 888.5 L1179.7 890.0 L1182.5 900.3 L1185.3 903.1 L1188.0 904.0 L1190.8 901.4 L1193.3 905.7 L1195.9 901.4 L1198.4 903.7 L1200.9 902.6 L1203.5 898.7 L1206.0 890.7 L1208.4 898.6 L1210.9 896.0 L1213.3 901.7 L1215.7 890.9 L1218.1 895.7 L1221.0 894.6 L1223.8 900.2 L1226.6 897.9 L1229.5 895.8 L1232.3 891.4 L1234.7 893.4 L1237.1 895.4 L1239.4 884.1 L1241.8 886.2 L1244.3 879.5 L1246.8 885.5 L1249.3 884.0 L1251.8 881.1 L1256.0 879.6 L1256.0 931.0Z" fill="#7e7e7e" stroke="#666" stroke-width="0.8"/><rect x="730.0" y="792.0" width="526.0" height="139.0" fill="none" stroke="#222" stroke-width="1.7"/><line x1="730.0" y1="931.0" x2="1257.0" y2="931.0" stroke="#111" stroke-width="3.5"/><line x1="1256.0" y1="792.0" x2="1256.0" y2="931.0" stroke="#111" stroke-width="3"/><g transform="matrix(0.52242,0.08357,-0.06873,0.42434,220.259,720.705)"><ellipse cx="200" cy="350" rx="150" ry="42" fill="#cfcfcf" opacity="0.85" filter="url(#b6)" transform="rotate(14 200 350)"/><ellipse cx="470" cy="430" rx="60" ry="80" fill="#dcdcdc" opacity="0.8" filter="url(#b6)"/><g transform="rotate(17 45 225)"><rect x="40" y="205" width="75" height="40" rx="10" fill="url(#metalv)" stroke="#7a7a7a" stroke-width="1.2"/><ellipse cx="44" cy="225" rx="7" ry="19" fill="#b5b5b5" stroke="#808080" stroke-width="1"/><rect x="105" y="212" width="275" height="30" rx="6" fill="url(#metalv)"/></g><line x1="112" y1="140" x2="128" y2="240" stroke="#8a8a8a" stroke-width="17" stroke-linecap="round"/><line x1="111" y1="140" x2="127" y2="240" stroke="#e9e9e9" stroke-width="9" stroke-linecap="round"/><line x1="190" y1="198" x2="200" y2="265" stroke="#8a8a8a" stroke-width="17" stroke-linecap="round"/><line x1="189" y1="198" x2="199" y2="265" stroke="#e9e9e9" stroke-width="9" stroke-linecap="round"/><line x1="266" y1="218" x2="262" y2="290" stroke="#8a8a8a" stroke-width="17" stroke-linecap="round"/><line x1="265" y1="218" x2="261" y2="290" stroke="#e9e9e9" stroke-width="9" stroke-linecap="round"/><line x1="326" y1="200" x2="326" y2="275" stroke="#8a8a8a" stroke-width="17" stroke-linecap="round"/><line x1="325" y1="200" x2="325" y2="275" stroke="#e9e9e9" stroke-width="9" stroke-linecap="round"/><ellipse cx="122" cy="248" rx="15" ry="44" fill="url(#metal)" stroke="#5e5e5e" stroke-width="2" transform="rotate(-10 122 248)"/><ellipse cx="150" cy="262" rx="15" ry="44" fill="url(#metal)" stroke="#5e5e5e" stroke-width="2" transform="rotate(-10 150 262)"/><ellipse cx="183" cy="272" rx="15" ry="44" fill="url(#metal)" stroke="#5e5e5e" stroke-width="2" transform="rotate(-10 183 272)"/><ellipse cx="213" cy="285" rx="15" ry="44" fill="url(#metal)" stroke="#5e5e5e" stroke-width="2" transform="rotate(-10 213 285)"/><ellipse cx="243" cy="293" rx="15" ry="44" fill="url(#metal)" stroke="#5e5e5e" stroke-width="2" transform="rotate(-10 243 293)"/><ellipse cx="272" cy="302" rx="15" ry="44" fill="url(#metal)" stroke="#5e5e5e" stroke-width="2" transform="rotate(-10 272 302)"/><ellipse cx="305" cy="305" rx="15" ry="44" fill="url(#metal)" stroke="#5e5e5e" stroke-width="2" transform="rotate(-10 305 305)"/><ellipse cx="338" cy="318" rx="15" ry="44" fill="url(#metal)" stroke="#5e5e5e" stroke-width="2" transform="rotate(-10 338 318)"/><ellipse cx="136" cy="257" rx="7" ry="30" fill="#4a4a4a" opacity="0.75" transform="rotate(-10 136 257)"/><ellipse cx="198" cy="280" rx="7" ry="30" fill="#4a4a4a" opacity="0.75" transform="rotate(-10 198 280)"/><ellipse cx="258" cy="299" rx="7" ry="30" fill="#4a4a4a" opacity="0.75" transform="rotate(-10 258 299)"/><ellipse cx="322" cy="313" rx="7" ry="30" fill="#4a4a4a" opacity="0.75" transform="rotate(-10 322 313)"/><g transform="rotate(-12 105 108)"><rect x="72.0" y="79.0" width="66" height="68.0" rx="5" fill="url(#metal)" stroke="#8a8a8a" stroke-width="1.2"/><ellipse cx="105" cy="146.0" rx="33.0" ry="10" fill="#b9b9b9" /><ellipse cx="105" cy="80.0" rx="33.0" ry="13" fill="#f3f3f3" stroke="#9c9c9c" stroke-width="1.3"/><ellipse cx="105" cy="97.0" rx="33.0" ry="12" fill="none" stroke="#8f8f8f" stroke-width="2"/></g><g transform="rotate(-12 185 165)"><rect x="154.0" y="139.0" width="62" height="62.0" rx="5" fill="url(#metal)" stroke="#8a8a8a" stroke-width="1.2"/><ellipse cx="185" cy="200.0" rx="31.0" ry="10" fill="#b9b9b9" /><ellipse cx="185" cy="140.0" rx="31.0" ry="13" fill="#f3f3f3" stroke="#9c9c9c" stroke-width="1.3"/><ellipse cx="185" cy="157.0" rx="31.0" ry="12" fill="none" stroke="#8f8f8f" stroke-width="2"/></g><g transform="rotate(-12 262 187)"><rect x="232.0" y="163.0" width="60" height="58.0" rx="5" fill="url(#metal)" stroke="#8a8a8a" stroke-width="1.2"/><ellipse cx="262" cy="220.0" rx="30.0" ry="10" fill="#b9b9b9" /><ellipse cx="262" cy="164.0" rx="30.0" ry="13" fill="#f3f3f3" stroke="#9c9c9c" stroke-width="1.3"/><ellipse cx="262" cy="181.0" rx="30.0" ry="12" fill="none" stroke="#8f8f8f" stroke-width="2"/></g><g transform="rotate(-12 322 167)"><rect x="289.0" y="138.0" width="66" height="68.0" rx="5" fill="url(#metal)" stroke="#8a8a8a" stroke-width="1.2"/><ellipse cx="322" cy="205.0" rx="33.0" ry="10" fill="#b9b9b9" /><ellipse cx="322" cy="139.0" rx="33.0" ry="13" fill="#f3f3f3" stroke="#9c9c9c" stroke-width="1.3"/><ellipse cx="322" cy="156.0" rx="33.0" ry="12" fill="none" stroke="#8f8f8f" stroke-width="2"/></g><g transform="rotate(7 440 345)"><ellipse cx="432" cy="347" rx="62" ry="156" fill="#8f8f8f" stroke="#5f5f5f" stroke-width="7" stroke-dasharray="3.5 3.5"/><ellipse cx="444" cy="345" rx="60" ry="154" fill="url(#disc)" stroke="#8c8c8c" stroke-width="2"/></g><rect x="457" y="125" width="20" height="50" fill="#1a9a2a" stroke="#0b6a18" stroke-width="2" transform="rotate(8 467 150)"/><text x="468" y="100" font-size="22" text-anchor="middle" fill="#18a028" style="stroke:#18a028" transform="rotate(-13 468 100)">crank sensor</text></g></svg>
<div style="left:1408px;top:171px;width:272px;height:860px;background:#fff;"></div>
<div style="left:1409px;top:221px;width:6px;height:810px;background:linear-gradient(90deg,#cfe0f6,#5a8edb 45%,#4a7fd0);"></div>
<div style="left:1415px;top:255px;width:2px;height:748px;background:#7c8088;"></div>
<div style="left:1409px;top:175px;width:271px;height:23px;background:linear-gradient(180deg,#d2e4fb,#aecdf4);border:1px solid #9bbdea;"></div>
<div class="t" style="left:1419px;top:180px;font-size:11.3px;font-weight:bold;color:#0f2a70;">Analysis project</div>
<div style="left:1650px;top:181px;width:3px;height:10px;background:#223a78"></div><div style="left:1648px;top:181px;width:7px;height:2px;background:#223a78"></div>
<div class="t" style="left:1664px;top:179px;font-size:12px;font-weight:bold;color:#223a78;">x</div>
<div style="left:1409px;top:198px;width:271px;height:23px;background:linear-gradient(180deg,#c8defa,#a8c9f2);border-top:1px solid #eef5fe;border-bottom:1px solid #8fb4e6;"></div>
<div class="t" style="left:1418px;top:203px;font-size:11.3px;font-weight:bold;color:#0f2a70;">Analysis project</div>
<div style="left:1415px;top:221px;width:265px;height:35px;background:#fdfdfd;border:1px solid #c6d3e6;"></div>
<div style="left:1438px;top:226px;width:240px;height:24px;background:#fff;border:1px solid #9aa6b8;border-radius:2px"></div>
<div style="left:1422px;top:228px;width:9px;height:9px;border:2px solid #d89a20;border-radius:6px"></div><div style="left:1421px;top:237px;width:2px;height:8px;background:#4a68b0;transform:rotate(35deg)"></div>
<div style="left:1506px;top:395px;width:0;height:276px;border-left:1px dotted #999"></div>
<div style="left:1426px;top:277px;width:0;height:56px;border-left:1px dotted #999"></div>
<div class="ic" style="left:1419px;top:261.0px;background:linear-gradient(180deg,#ffd860,#e8a818);border:1px solid #b07a10;border-radius:2px 4px 2px 2px;height:11px;margin-top:2px"></div>
<div class="tr" style="left:1438px;top:259.0px;">Tests</div>
<div class="ic" style="left:1440px;top:279.6px;background:radial-gradient(circle,#fff 30%,#3a6ad8 40%);border:2px solid #2048b0;border-radius:8px"></div>
<div class="tr" style="left:1459px;top:277.6px;">Time from sample rate</div>
<div style="left:1426px;top:301.1px;width:9px;height:9px;border:1px solid #8a94a8;background:#fff;font-size:8px;line-height:7px;text-align:center;color:#333">+</div>
<div class="ic" style="left:1440px;top:298.1px;background:linear-gradient(180deg,#ffd860,#e8a818);border:1px solid #b07a10;border-radius:2px 4px 2px 2px;height:11px;margin-top:2px"></div>
<div class="tr" style="left:1459px;top:296.1px;">[01] Meas_001.TST [C:\U_Daten\MessDaten\Demodata]</div>
<div style="left:1426px;top:319.7px;width:9px;height:9px;border:1px solid #8a94a8;background:#fff;font-size:8px;line-height:7px;text-align:center;color:#333">-</div>
<div class="ic" style="left:1440px;top:316.7px;background:linear-gradient(180deg,#ffd860,#e8a818);border:1px solid #b07a10;border-radius:2px 4px 2px 2px;height:11px;margin-top:2px"></div>
<div class="tr" style="left:1459px;top:314.7px;">[02] Combustion analysis.BIN [C:\U_Daten\Mess]</div>
<div style="left:1445px;top:338.2px;width:9px;height:9px;border:1px solid #8a94a8;background:#fff;font-size:8px;line-height:7px;text-align:center;color:#333">+</div>
<div class="ic" style="left:1459px;top:335.2px;background:linear-gradient(180deg,#60e060,#18a030);border:1px solid #0c7020"></div>
<div class="tr" style="left:1478px;top:333.2px;">Test parameters</div>
<div style="left:1445px;top:356.8px;width:9px;height:9px;border:1px solid #8a94a8;background:#fff;font-size:8px;line-height:7px;text-align:center;color:#333">-</div>
<div class="ic" style="left:1459px;top:353.8px;background:radial-gradient(circle at 40% 40%,#9ab8ff,#2040c0);border:1px solid #183090;border-radius:7px"></div>
<div class="tr" style="left:1478px;top:351.8px;">Test data</div>
<div style="left:1464px;top:375.4px;width:9px;height:9px;border:1px solid #8a94a8;background:#fff;font-size:8px;line-height:7px;text-align:center;color:#333">-</div>
<div class="ic" style="left:1478px;top:372.4px;background:linear-gradient(180deg,#3050c0 55%,#e8e8f0 55%);border:1px solid #182878"></div>
<div class="tr" style="left:1497px;top:370.4px;">C:\U_Daten\MessDaten\Demodata\Combustion</div>
<div class="ic" style="left:1499px;top:390.9px;background:linear-gradient(180deg,#f0c040,#d08020);border:1px solid #8a5a10;border-radius:3px"></div>
<div class="ic" style="left:1499px;top:409.5px;background:linear-gradient(135deg,#f0c860 0 45%,#3858c8 45%);border:1px solid #5a4a20;border-radius:3px;transform:rotate(20deg)"></div>
<div class="tr" style="left:1518px;top:407.5px;background:#eef1f6;border:1px solid #c8ccd4;padding:0 2px;margin-left:-3px;">Acceleration</div>
<div class="ic" style="left:1499px;top:428.0px;background:linear-gradient(135deg,#f0c860 0 45%,#3858c8 45%);border:1px solid #5a4a20;border-radius:3px;transform:rotate(20deg)"></div>
<div class="tr" style="left:1518px;top:426.0px;">p_cyl_01</div>
<div class="ic" style="left:1499px;top:446.6px;background:linear-gradient(135deg,#f0c860 0 45%,#3858c8 45%);border:1px solid #5a4a20;border-radius:3px;transform:rotate(20deg)"></div>
<div class="tr" style="left:1518px;top:444.6px;">p_cyl_02</div>
<div class="ic" style="left:1499px;top:465.2px;background:linear-gradient(135deg,#f0c860 0 45%,#3858c8 45%);border:1px solid #5a4a20;border-radius:3px;transform:rotate(20deg)"></div>
<div class="tr" style="left:1518px;top:463.2px;">p_cyl_03</div>
<div class="ic" style="left:1499px;top:483.7px;background:linear-gradient(135deg,#f0c860 0 45%,#3858c8 45%);border:1px solid #5a4a20;border-radius:3px;transform:rotate(20deg)"></div>
<div class="tr" style="left:1518px;top:481.7px;">p_cyl_04</div>
<div class="ic" style="left:1499px;top:502.3px;background:linear-gradient(135deg,#f0c860 0 45%,#3858c8 45%);border:1px solid #5a4a20;border-radius:3px;transform:rotate(20deg)"></div>
<div class="tr" style="left:1518px;top:500.3px;">str_EXHV_</div>
<div class="ic" style="left:1499px;top:520.8px;background:linear-gradient(135deg,#f0c860 0 45%,#3858c8 45%);border:1px solid #5a4a20;border-radius:3px;transform:rotate(20deg)"></div>
<div class="tr" style="left:1518px;top:518.8px;">cyl_01_top</div>
<div class="ic" style="left:1499px;top:539.4px;background:linear-gradient(135deg,#f0c860 0 45%,#3858c8 45%);border:1px solid #5a4a20;border-radius:3px;transform:rotate(20deg)"></div>
<div class="tr" style="left:1518px;top:537.4px;">cyl_02_top</div>
<div class="ic" style="left:1499px;top:558.0px;background:linear-gradient(135deg,#f0c860 0 45%,#3858c8 45%);border:1px solid #5a4a20;border-radius:3px;transform:rotate(20deg)"></div>
<div class="tr" style="left:1518px;top:556.0px;">cyl_03_top</div>
<div class="ic" style="left:1499px;top:576.5px;background:linear-gradient(135deg,#f0c860 0 45%,#3858c8 45%);border:1px solid #5a4a20;border-radius:3px;transform:rotate(20deg)"></div>
<div class="tr" style="left:1518px;top:574.5px;">cyl_04_top</div>
<div class="ic" style="left:1499px;top:595.1px;background:linear-gradient(135deg,#f0c860 0 45%,#3858c8 45%);border:1px solid #5a4a20;border-radius:3px;transform:rotate(20deg)"></div>
<div class="tr" style="left:1518px;top:593.1px;">cyl_01_bot</div>
<div class="ic" style="left:1499px;top:613.6px;background:linear-gradient(135deg,#f0c860 0 45%,#3858c8 45%);border:1px solid #5a4a20;border-radius:3px;transform:rotate(20deg)"></div>
<div class="tr" style="left:1518px;top:611.6px;">cyl_02_bot</div>
<div class="ic" style="left:1499px;top:632.2px;background:linear-gradient(135deg,#f0c860 0 45%,#3858c8 45%);border:1px solid #5a4a20;border-radius:3px;transform:rotate(20deg)"></div>
<div class="tr" style="left:1518px;top:630.2px;">cyl_03_bot</div>
<div class="ic" style="left:1499px;top:650.8px;background:linear-gradient(135deg,#f0c860 0 45%,#3858c8 45%);border:1px solid #5a4a20;border-radius:3px;transform:rotate(20deg)"></div>
<div class="tr" style="left:1518px;top:648.8px;">cyl_04_bot</div>
<div class="ic" style="left:1419px;top:669.3px;background:linear-gradient(180deg,#ffd860,#e8a818);border:1px solid #b07a10;border-radius:2px 4px 2px 2px;height:11px;margin-top:2px"></div>
<div class="tr" style="left:1438px;top:667.3px;">Computations</div>
<div style="left:1418px;top:984px;width:262px;height:19px;background:#ededed;border-top:1px solid #d8d8d8"></div>
<div class="t" style="left:1421px;top:987px;font-size:8px;color:#333">&#x25C0;</div><div class="t" style="left:1667px;top:987px;font-size:8px;color:#333">&#x25B6;</div>
<div style="left:1434px;top:986px;width:71px;height:16px;background:linear-gradient(180deg,#f6f6f6,#d4d4d4);border:1px solid #9a9a9a;border-radius:2px"></div>
<div style="left:1468px;top:991px;width:1px;height:6px;background:#777;box-shadow:3px 0 #777,-3px 0 #777"></div>
<div style="left:1408px;top:1003px;width:272px;height:28px;background:linear-gradient(180deg,#c9defa,#b4d0f7);border-top:1px solid #e0c8a0"></div>
<div style="left:1408px;top:1003px;width:7px;height:28px;background:linear-gradient(90deg,#cfe0f6,#4d86d8 45%,#3b74c8);"></div>
<div style="left:1420px;top:1004px;width:93px;height:25px;background:#fff;border:1px solid #8fb0e0;border-top:none"></div>
<div class="t" style="left:1427px;top:1010px;font-size:11.6px;color:#1c2e70;">Analysis project</div>
<div class="t" style="left:1525px;top:1010px;font-size:11.8px;color:#1c2e70;">Configure Panel</div>
<div style="left:4px;top:1012px;width:1405px;height:18px;background:#eeeeee;border-top:1px solid #dcdcdc"></div>
<div class="t" style="left:6px;top:1015px;font-size:8px;color:#222">&#x25BC;</div>
<div class="t" style="left:24px;top:1015px;font-size:8px;color:#333">&#x25C0;</div>
<div style="left:38px;top:1014px;width:38px;height:15px;background:linear-gradient(180deg,#f6f6f6,#d0d0d0);border:1px solid #999;border-radius:2px"></div>
<div style="left:56px;top:1018px;width:1px;height:7px;background:#777;box-shadow:3px 0 #777,-3px 0 #777"></div>
<div style="left:0;top:1030px;width:1680px;height:20px;background:linear-gradient(180deg,#e4ebf6 0%,#d3deef 40%,#c3d1e8 100%);border-top:1px solid #f4f7fb"></div>
<div style="left:1020px;top:1031px;width:2px;height:16px;background:linear-gradient(90deg,#a8b6d0 50%,#f4f7fb 50%)"></div>
<div style="left:1512px;top:1031px;width:2px;height:16px;background:linear-gradient(90deg,#a8b6d0 50%,#f4f7fb 50%)"></div>
<div style="left:14px;top:1042px;width:20px;height:20px;border:2px solid #5b8fe0;border-radius:10px;opacity:.8"></div>
<div style="left:1676px;top:20px;width:4px;height:1030px;background:#f3f6fb;"></div>
</div></div></body></html>
